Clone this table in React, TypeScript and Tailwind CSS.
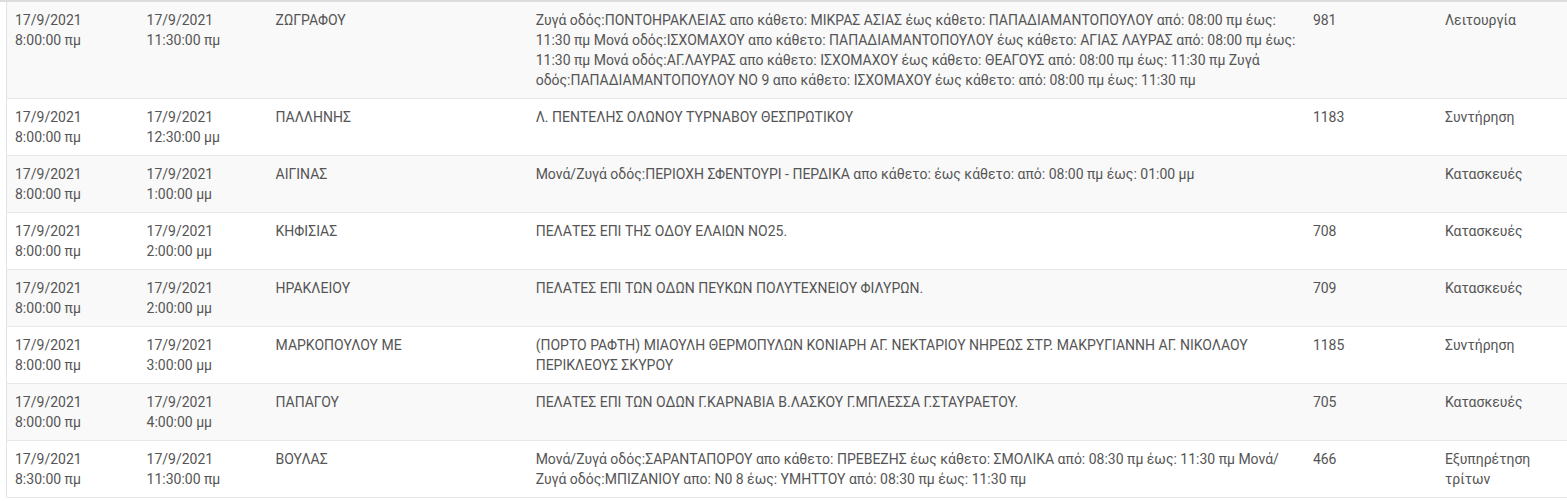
const rows = [
  {
    from: ['17/9/2021', '8:00:00 πμ'],
    to: ['17/9/2021', '11:30:00 πμ'],
    area: 'ΖΩΓΡΑΦΟΥ',
    desc: 'Ζυγά οδός:ΠΟΝΤΟΗΡΑΚΛΕΙΑΣ απο κάθετο: ΜΙΚΡΑΣ ΑΣΙΑΣ έως κάθετο: ΠΑΠΑΔΙΑΜΑΝΤΟΠΟΥΛΟΥ από: 08:00 πμ έως: 11:30 πμ Μονά οδός:ΙΣΧΟΜΑΧΟΥ απο κάθετο: ΠΑΠΑΔΙΑΜΑΝΤΟΠΟΥΛΟΥ έως κάθετο: ΑΓΙΑΣ ΛΑΥΡΑΣ από: 08:00 πμ έως: 11:30 πμ Μονά οδός:ΑΓ.ΛΑΥΡΑΣ απο κάθετο: ΙΣΧΟΜΑΧΟΥ έως κάθετο: ΘΕΑΓΟΥΣ από: 08:00 πμ έως: 11:30 πμ Ζυγά οδός:ΠΑΠΑΔΙΑΜΑΝΤΟΠΟΥΛΟΥ ΝΟ 9 απο κάθετο: ΙΣΧΟΜΑΧΟΥ έως κάθετο: από: 08:00 πμ έως: 11:30 πμ',
    num: '981',
    kind: 'Λειτουργία',
  },
  {
    from: ['17/9/2021', '8:00:00 πμ'],
    to: ['17/9/2021', '12:30:00 μμ'],
    area: 'ΠΑΛΛΗΝΗΣ',
    desc: 'Λ. ΠΕΝΤΕΛΗΣ ΟΛΩΝΟΥ ΤΥΡΝΑΒΟΥ ΘΕΣΠΡΩΤΙΚΟΥ',
    num: '1183',
    kind: 'Συντήρηση',
  },
  {
    from: ['17/9/2021', '8:00:00 πμ'],
    to: ['17/9/2021', '1:00:00 μμ'],
    area: 'ΑΙΓΙΝΑΣ',
    desc: 'Μονά/Ζυγά οδός:ΠΕΡΙΟΧΗ ΣΦΕΝΤΟΥΡΙ - ΠΕΡΔΙΚΑ απο κάθετο: έως κάθετο: από: 08:00 πμ έως: 01:00 μμ',
    num: '',
    kind: 'Κατασκευές',
  },
  {
    from: ['17/9/2021', '8:00:00 πμ'],
    to: ['17/9/2021', '2:00:00 μμ'],
    area: 'ΚΗΦΙΣΙΑΣ',
    desc: 'ΠΕΛΑΤΕΣ ΕΠΙ ΤΗΣ ΟΔΟΥ ΕΛΑΙΩΝ ΝΟ25.',
    num: '708',
    kind: 'Κατασκευές',
  },
  {
    from: ['17/9/2021', '8:00:00 πμ'],
    to: ['17/9/2021', '2:00:00 μμ'],
    area: 'ΗΡΑΚΛΕΙΟΥ',
    desc: 'ΠΕΛΑΤΕΣ ΕΠΙ ΤΩΝ ΟΔΩΝ ΠΕΥΚΩΝ ΠΟΛΥΤΕΧΝΕΙΟΥ ΦΙΛΥΡΩΝ.',
    num: '709',
    kind: 'Κατασκευές',
  },
  {
    from: ['17/9/2021', '8:00:00 πμ'],
    to: ['17/9/2021', '3:00:00 μμ'],
    area: 'ΜΑΡΚΟΠΟΥΛΟΥ ΜΕ',
    desc: '(ΠΟΡΤΟ ΡΑΦΤΗ) ΜΙΑΟΥΛΗ ΘΕΡΜΟΠΥΛΩΝ ΚΟΝΙΑΡΗ ΑΓ. ΝΕΚΤΑΡΙΟΥ ΝΗΡΕΩΣ ΣΤΡ. ΜΑΚΡΥΓΙΑΝΝΗ ΑΓ. ΝΙΚΟΛΑΟΥ ΠΕΡΙΚΛΕΟΥΣ ΣΚΥΡΟΥ',
    num: '1185',
    kind: 'Συντήρηση',
  },
  {
    from: ['17/9/2021', '8:00:00 πμ'],
    to: ['17/9/2021', '4:00:00 μμ'],
    area: 'ΠΑΠΑΓΟΥ',
    desc: 'ΠΕΛΑΤΕΣ ΕΠΙ ΤΩΝ ΟΔΩΝ Γ.ΚΑΡΝΑΒΙΑ Β.ΛΑΣΚΟΥ Γ.ΜΠΛΕΣΣΑ Γ.ΣΤΑΥΡΑΕΤΟΥ.',
    num: '705',
    kind: 'Κατασκευές',
  },
  {
    from: ['17/9/2021', '8:30:00 πμ'],
    to: ['17/9/2021', '11:30:00 πμ'],
    area: 'ΒΟΥΛΑΣ',
    desc: 'Μονά/Ζυγά οδός:ΣΑΡΑΝΤΑΠΟΡΟΥ απο κάθετο: ΠΡΕΒΕΖΗΣ έως κάθετο: ΣΜΟΛΙΚΑ από: 08:30 πμ έως: 11:30 πμ Μονά/ Ζυγά οδός:ΜΠΙΖΑΝΙΟΥ απο: Ν0 8 έως: ΥΜΗΤΤΟΥ από: 08:30 πμ έως: 11:30 πμ',
    num: '466',
    kind: 'Εξυπηρέτηση τρίτων',
  },
];

export default function App() {
  return (
    <div className="w-[1567px] h-[501px] bg-white overflow-hidden font-['Roboto',sans-serif] text-[14px] leading-[20px] text-[#555555]">
      {/* table head edge, scrolled off above */}
      <div className="h-[2px] bg-[#dcdcdc]" />
      <table className="ml-[6px] w-[1561px] table-fixed border-collapse border-l border-[#e2e2e2]">
        <colgroup>
          <col className="w-[132px]" />
          <col className="w-[129px]" />
          <col className="w-[260px]" />
          <col className="w-[777px]" />
          <col className="w-[132px]" />
          <col className="w-[130px]" />
        </colgroup>
        <tbody>
          {rows.map((r, i) => (
            <tr key={i} className={`border-b border-[#e8e8e8] align-top ${i % 2 === 0 ? 'bg-[#f9f9f9]' : 'bg-white'}`}>
              <td className="px-2 py-2">
                {r.from[0]}
                <br />
                {r.from[1]}
              </td>
              <td className="px-2 py-2">
                {r.to[0]}
                <br />
                {r.to[1]}
              </td>
              <td className="px-2 py-2">{r.area}</td>
              <td className="px-2 py-2">{r.desc}</td>
              <td className="px-2 py-2">{r.num}</td>
              <td className="px-2 py-2">{r.kind}</td>
            </tr>
          ))}
        </tbody>
      </table>
    </div>
  );
}
